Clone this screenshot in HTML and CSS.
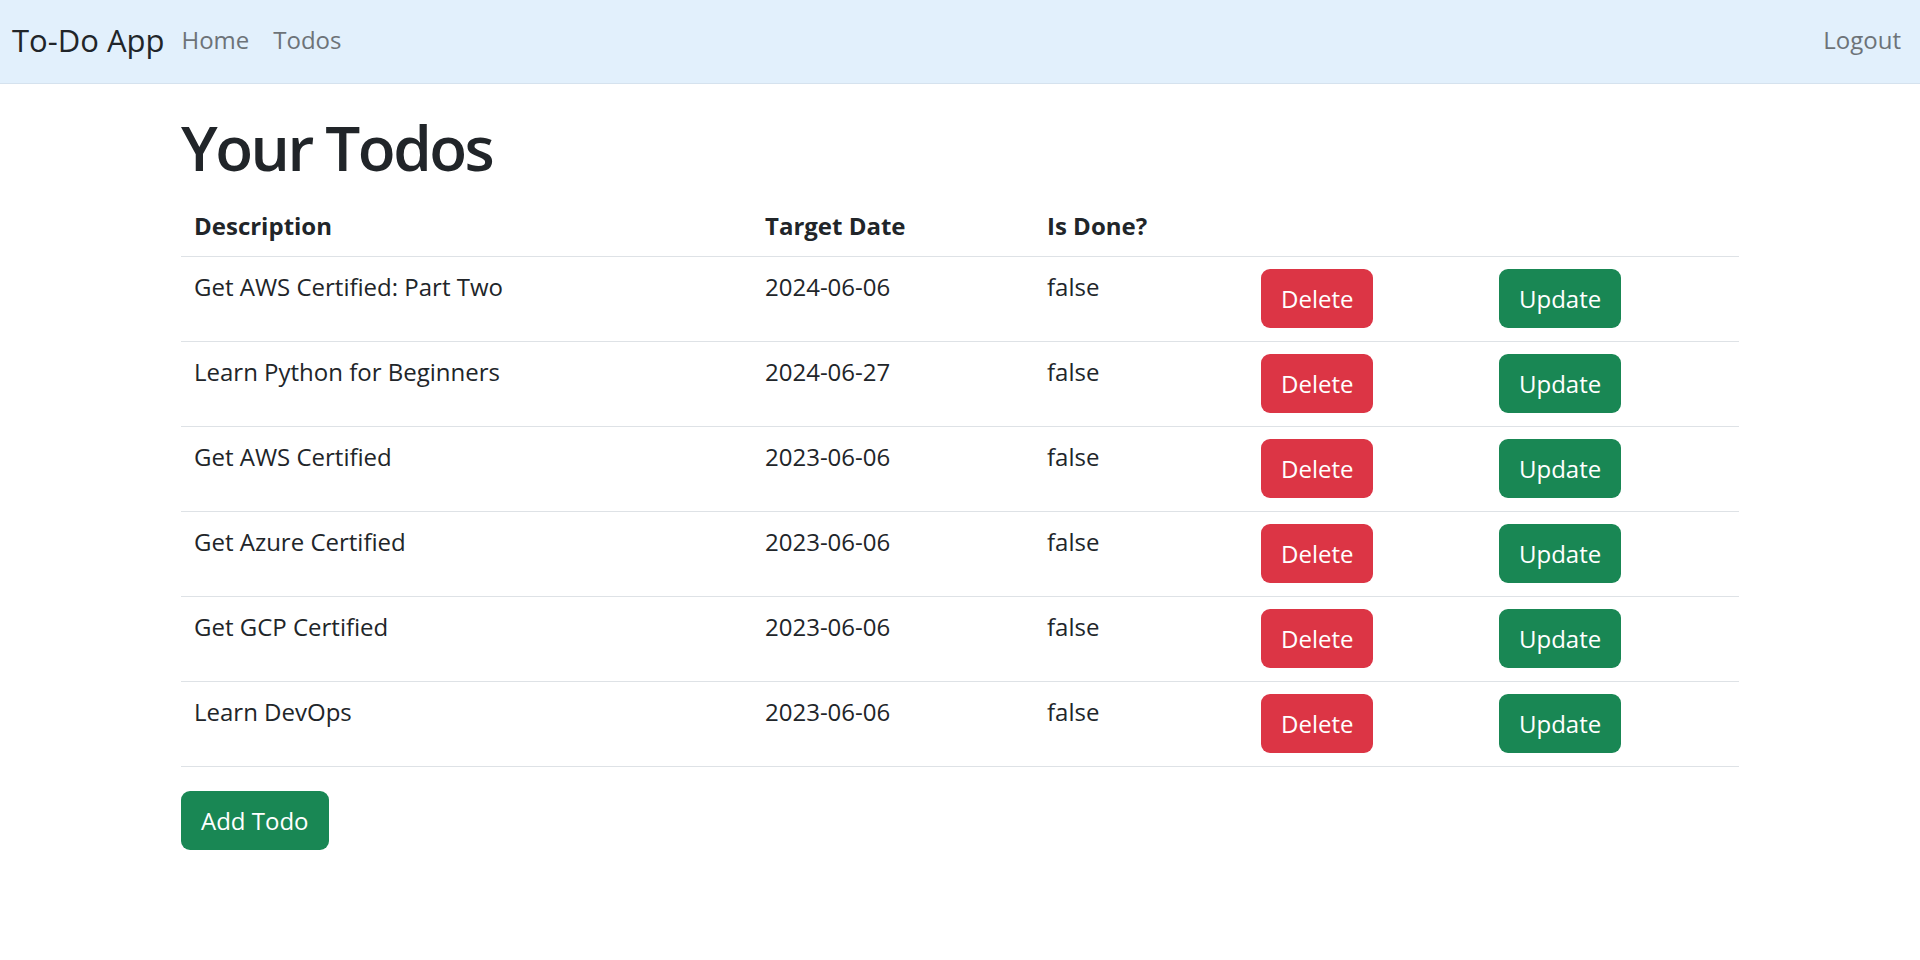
FILE: index.html
```html
<!DOCTYPE html>
<html lang="en">
<head>
<meta charset="utf-8">
<title>To-Do App</title>
<link rel="stylesheet" href="styles.css">
</head>
<body>
<nav class="navbar">
  <a class="brand" href="#">To-Do App</a>
  <a class="nav-link" href="#">Home</a>
  <a class="nav-link" href="#">Todos</a>
  <span class="spacer"></span>
  <a class="nav-link logout" href="#">Logout</a>
</nav>
<main class="container">
  <h1 class="title">Your Todos</h1>
  <table class="todos">
    <colgroup>
      <col class="c-desc"><col class="c-date"><col class="c-done"><col class="c-del"><col class="c-upd">
    </colgroup>
    <thead>
      <tr><th>Description</th><th>Target Date</th><th>Is Done?</th><th></th><th></th></tr>
    </thead>
    <tbody>
      <tr><td>Get AWS Certified: Part Two</td><td>2024-06-06</td><td>false</td><td><button class="btn btn-danger">Delete</button></td><td><button class="btn btn-success">Update</button></td></tr>
      <tr><td>Learn Python for Beginners</td><td>2024-06-27</td><td>false</td><td><button class="btn btn-danger">Delete</button></td><td><button class="btn btn-success">Update</button></td></tr>
      <tr><td>Get AWS Certified</td><td>2023-06-06</td><td>false</td><td><button class="btn btn-danger">Delete</button></td><td><button class="btn btn-success">Update</button></td></tr>
      <tr><td>Get Azure Certified</td><td>2023-06-06</td><td>false</td><td><button class="btn btn-danger">Delete</button></td><td><button class="btn btn-success">Update</button></td></tr>
      <tr><td>Get GCP Certified</td><td>2023-06-06</td><td>false</td><td><button class="btn btn-danger">Delete</button></td><td><button class="btn btn-success">Update</button></td></tr>
      <tr><td>Learn DevOps</td><td>2023-06-06</td><td>false</td><td><button class="btn btn-danger">Delete</button></td><td><button class="btn btn-success">Update</button></td></tr>
    </tbody>
  </table>
  <button class="btn btn-success">Add Todo</button>
</main>
</body>
</html>
```

FILE: styles.css
```css
* { box-sizing: border-box; }
html, body { margin: 0; padding: 0; }
body {
  font-family: "Open Sans", "Noto Sans", sans-serif;
  font-size: 24px;
  line-height: 1.5;
  color: #212529;
  background: #fff;
}
a { text-decoration: none; }

.navbar {
  display: flex;
  align-items: center;
  height: 84px;
  padding: 0 19px 3px 12px;
  background: #e2f0fc;
  border-bottom: 1px solid #d5e2ee;
}
.brand {
  font-size: 31px;
  color: #212529;
  margin-right: 5px;
}
.nav-link {
  font-size: 24px;
  color: #6d7378;
  padding: 0 12px;
}
.nav-link.logout { padding-right: 0; }
.spacer { flex: 1; }

.container {
  width: 1558px;
  margin: 0 auto;
  padding-top: 24px;
}
.title {
  font-size: 62px;
  font-weight: 600;
  letter-spacing: -2.5px;
  line-height: 79px;
  margin: 0 0 9px 0;
}

.todos {
  width: 100%;
  border-collapse: collapse;
  margin-bottom: 24px;
}
.c-desc { width: 571px; }
.c-date { width: 282px; }
.c-done { width: 214px; }
.c-del { width: 238px; }
.c-upd { width: 253px; }
.todos th, .todos td {
  text-align: left;
  vertical-align: top;
  padding: 12px 13px;
  line-height: 36px;
  border-bottom: 1px solid #dee2e6;
}
.todos th { font-weight: 700; }
.todos td { height: 85px; }

.btn {
  font-family: inherit;
  font-size: 24px;
  line-height: 37px;
  padding: 11px 20px;
  border: 0;
  border-radius: 9px;
  color: #fff;
  cursor: pointer;
}
.btn-danger { background: #dc3545; }
.btn-success { background: #198754; }
```
